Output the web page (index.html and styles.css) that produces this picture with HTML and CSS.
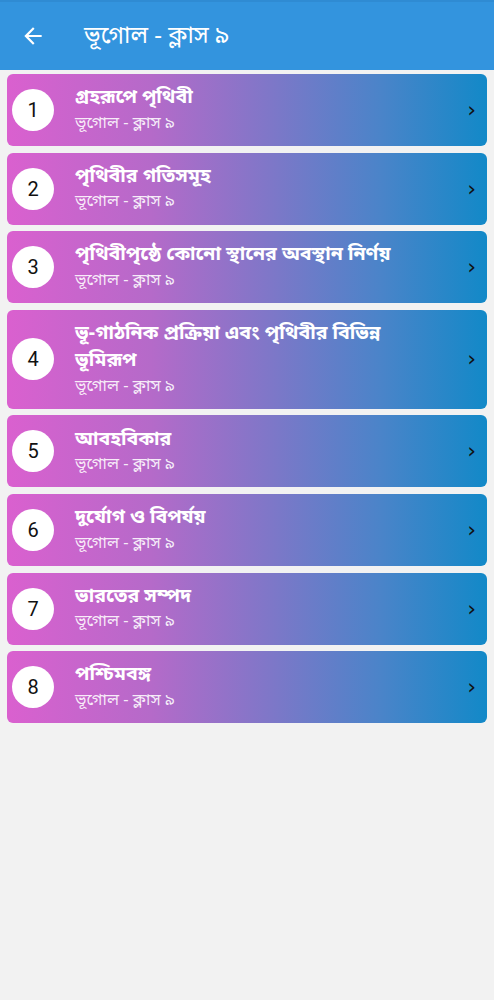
FILE: index.html
```html
<!DOCTYPE html>
<html lang="bn">
<head>
<meta charset="utf-8">
<link rel="stylesheet" href="styles.css">
</head>
<body>
<header class="appbar">
  <svg class="back" viewBox="0 0 24 24" width="26" height="26"><path d="M20 11H7.83l5.59-5.59L12 4l-8 8 8 8 1.41-1.41L7.83 13H20v-2z" fill="#fff"/></svg>
  <h1 class="title">ভূগোল - ক্লাস ৯</h1>
</header>
<main class="list">
  <div class="card"><span class="num">1</span><div class="txt"><div class="t">গ্রহরূপে পৃথিবী</div><div class="s">ভূগোল - ক্লাস ৯</div></div><span class="chev">›</span></div>
  <div class="card"><span class="num">2</span><div class="txt"><div class="t">পৃথিবীর গতিসমূহ</div><div class="s">ভূগোল - ক্লাস ৯</div></div><span class="chev">›</span></div>
  <div class="card"><span class="num">3</span><div class="txt"><div class="t">পৃথিবীপৃষ্ঠে কোনো স্থানের অবস্থান নির্ণয়</div><div class="s">ভূগোল - ক্লাস ৯</div></div><span class="chev">›</span></div>
  <div class="card"><span class="num">4</span><div class="txt"><div class="t">ভূ-গাঠনিক প্রক্রিয়া এবং পৃথিবীর বিভিন্ন ভূমিরূপ</div><div class="s">ভূগোল - ক্লাস ৯</div></div><span class="chev">›</span></div>
  <div class="card"><span class="num">5</span><div class="txt"><div class="t">আবহবিকার</div><div class="s">ভূগোল - ক্লাস ৯</div></div><span class="chev">›</span></div>
  <div class="card"><span class="num">6</span><div class="txt"><div class="t">দুর্যোগ ও বিপর্যয়</div><div class="s">ভূগোল - ক্লাস ৯</div></div><span class="chev">›</span></div>
  <div class="card"><span class="num">7</span><div class="txt"><div class="t">ভারতের সম্পদ</div><div class="s">ভূগোল - ক্লাস ৯</div></div><span class="chev">›</span></div>
  <div class="card"><span class="num">8</span><div class="txt"><div class="t">পশ্চিমবঙ্গ</div><div class="s">ভূগোল - ক্লাস ৯</div></div><span class="chev">›</span></div>
</main>
</body>
</html>
```
FILE: styles.css
```css
* { box-sizing: border-box; }
html, body { margin: 0; padding: 0; }
body {
  background: #f2f2f2;
  font-family: "Noto Sans Bengali", "Lohit Bengali", "Noto Sans", Roboto, sans-serif;
  width: 494px;
  min-height: 1000px;
}
.appbar {
  height: 70px;
  background: #3394de;
  border-top: 2px solid #2f8bd3;
  display: flex;
  align-items: center;
  padding-left: 20px;
}
.back { flex: none; }
.title {
  margin: 2px 0 0 38px;
  color: #fff;
  font-size: 24px;
  font-weight: 400;
}
.list {
  padding: 4px 7px;
  display: flex;
  flex-direction: column;
  gap: 6.6px;
}
.card {
  min-height: 72px;
  border-radius: 6px;
  background: linear-gradient(to right, #da60cf 0%, #b56ac9 30%, #7e77c8 55%, #4a84c9 78%, #1289c8 100%);
  display: flex;
  align-items: center;
  padding: 11px 11px 11px 5px;
}
.num {
  flex: none;
  width: 42px;
  height: 42px;
  border-radius: 50%;
  background: #fff;
  color: #111;
  display: flex;
  align-items: center;
  justify-content: center;
  font-family: Roboto, "Noto Sans", sans-serif;
  font-size: 20px;
}
.txt {
  flex: 1;
  margin-left: 21px;
  color: #fff;
}
.t {
  font-size: 19.5px;
  font-weight: 700;
  line-height: 27.5px;
  padding-right: 30px;
}
.s {
  font-size: 16.5px;
  line-height: 22px;
  color: rgba(255,255,255,0.88);
}
.chev {
  flex: none;
  color: #111;
  font-size: 22px;
  font-family: "DejaVu Sans", sans-serif;
  line-height: 1;
}
```
